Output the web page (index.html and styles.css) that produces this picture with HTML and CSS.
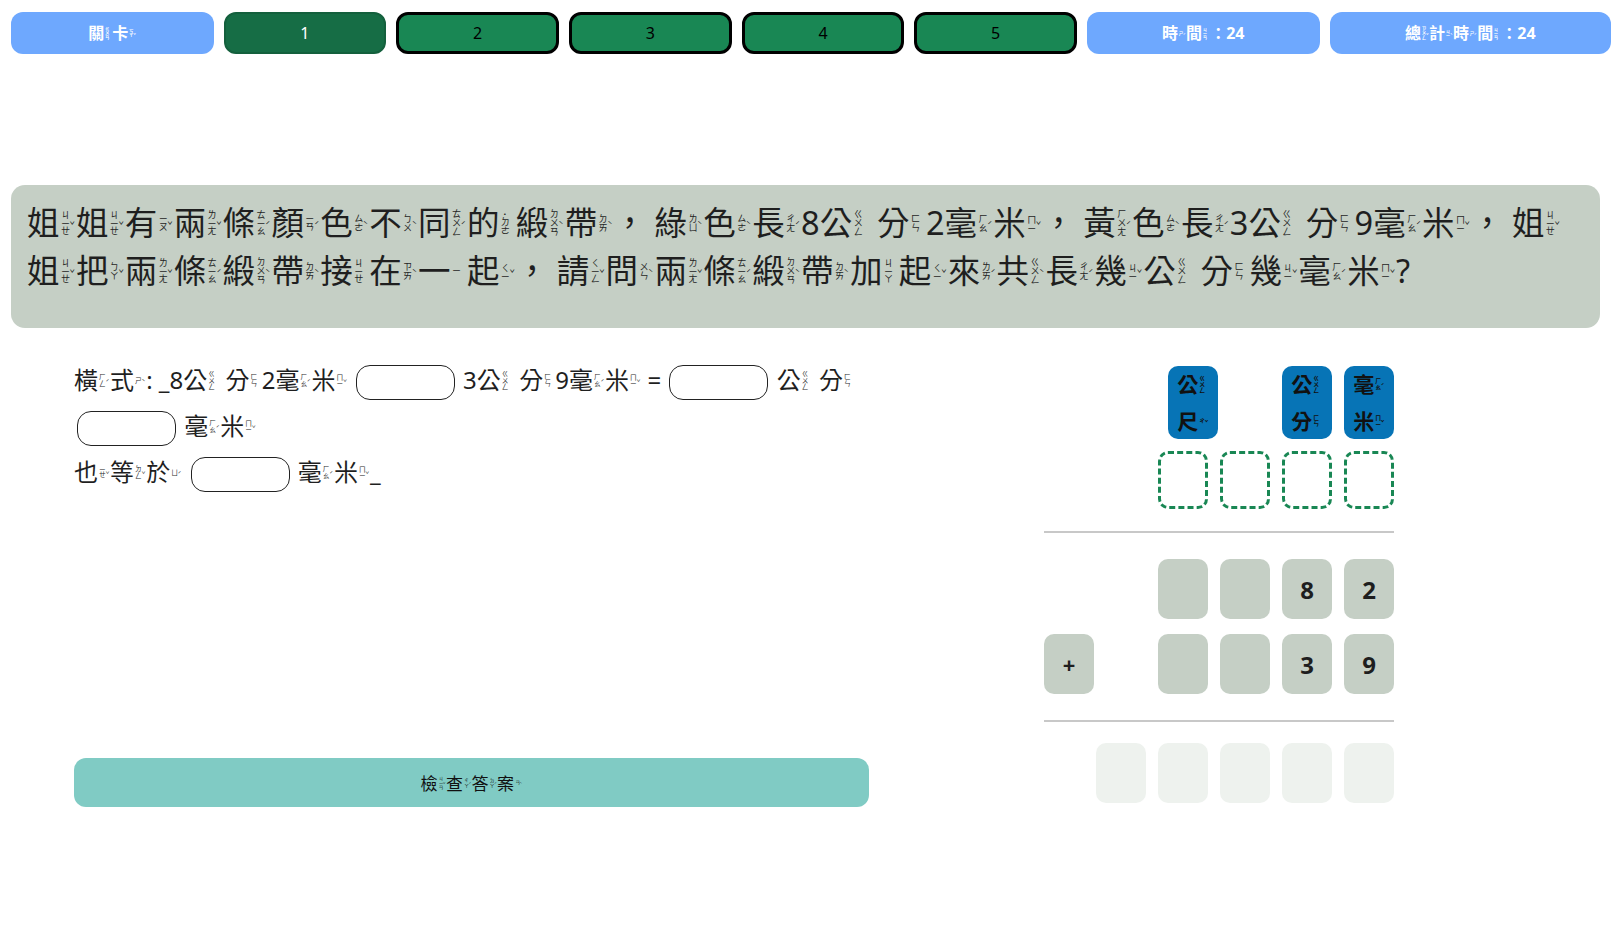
FILE: index.html
```html
<!DOCTYPE html>
<html lang="zh-Hant">
<head>
<meta charset="utf-8">
<title>緞帶加法</title>
<link rel="stylesheet" href="styles.css">
</head>
<body>
<nav class="bar">
  <div class="btn blue"><span class="z" data-p="ㄍㄨㄢ" data-t="">關</span><span class="z" data-p="ㄎㄚ" data-t="ˇ">卡</span></div>
  <div class="btn cur">1</div>
  <div class="btn lvl">2</div>
  <div class="btn lvl">3</div>
  <div class="btn lvl">4</div>
  <div class="btn lvl">5</div>
  <div class="btn blue"><span class="z" data-p="ㄕ" data-t="ˊ">時</span><span class="z" data-p="ㄐㄧㄢ" data-t="">間</span>：24</div>
  <div class="btn blue"><span class="z" data-p="ㄗㄨㄥ" data-t="ˇ">總</span><span class="z" data-p="ㄐㄧ" data-t="ˋ">計</span><span class="z" data-p="ㄕ" data-t="ˊ">時</span><span class="z" data-p="ㄐㄧㄢ" data-t="">間</span>：24</div>
</nav>

<section class="question">
  <p class="qtext"><span class="z" data-p="ㄐㄧㄝ" data-t="ˇ">姐</span><span class="z" data-p="ㄐㄧㄝ" data-t="ˇ">姐</span><span class="z" data-p="ㄧㄡ" data-t="ˇ">有</span><span class="z" data-p="ㄌㄧㄤ" data-t="ˇ">兩</span><span class="z" data-p="ㄊㄧㄠ" data-t="ˊ">條</span><span class="z" data-p="ㄧㄢ" data-t="ˊ">顏</span><span class="z" data-p="ㄙㄜ" data-t="ˋ">色</span><span class="z" data-p="ㄅㄨ" data-t="ˋ">不</span><span class="z" data-p="ㄊㄨㄥ" data-t="ˊ">同</span><span class="z" data-p="˙ㄉㄜ" data-t="">的</span><span class="z" data-p="ㄉㄨㄢ" data-t="ˋ">緞</span><span class="z" data-p="ㄉㄞ" data-t="ˋ">帶</span>， <span class="z" data-p="ㄌㄩ" data-t="ˋ">綠</span><span class="z" data-p="ㄙㄜ" data-t="ˋ">色</span><span class="z" data-p="ㄔㄤ" data-t="ˊ">長</span>8<span class="z" data-p="ㄍㄨㄥ" data-t="">公</span> <span class="z" data-p="ㄈㄣ" data-t="">分</span>2<span class="z" data-p="ㄏㄠ" data-t="ˊ">毫</span><span class="z" data-p="ㄇㄧ" data-t="ˇ">米</span>， <span class="z" data-p="ㄏㄨㄤ" data-t="ˊ">黃</span><span class="z" data-p="ㄙㄜ" data-t="ˋ">色</span><span class="z" data-p="ㄔㄤ" data-t="ˊ">長</span>3<span class="z" data-p="ㄍㄨㄥ" data-t="">公</span> <span class="z" data-p="ㄈㄣ" data-t="">分</span>9<span class="z" data-p="ㄏㄠ" data-t="ˊ">毫</span><span class="z" data-p="ㄇㄧ" data-t="ˇ">米</span>， <span class="z" data-p="ㄐㄧㄝ" data-t="ˇ">姐</span><br><span class="z" data-p="ㄐㄧㄝ" data-t="ˇ">姐</span><span class="z" data-p="ㄅㄚ" data-t="ˇ">把</span><span class="z" data-p="ㄌㄧㄤ" data-t="ˇ">兩</span><span class="z" data-p="ㄊㄧㄠ" data-t="ˊ">條</span><span class="z" data-p="ㄉㄨㄢ" data-t="ˋ">緞</span><span class="z" data-p="ㄉㄞ" data-t="ˋ">帶</span><span class="z" data-p="ㄐㄧㄝ" data-t="">接</span><span class="z" data-p="ㄗㄞ" data-t="ˋ">在</span><span class="z" data-p="ㄧ" data-t="">一</span><span class="z" data-p="ㄑㄧ" data-t="ˇ">起</span>， <span class="z" data-p="ㄑㄧㄥ" data-t="ˇ">請</span><span class="z" data-p="ㄨㄣ" data-t="ˋ">問</span><span class="z" data-p="ㄌㄧㄤ" data-t="ˇ">兩</span><span class="z" data-p="ㄊㄧㄠ" data-t="ˊ">條</span><span class="z" data-p="ㄉㄨㄢ" data-t="ˋ">緞</span><span class="z" data-p="ㄉㄞ" data-t="ˋ">帶</span><span class="z" data-p="ㄐㄧㄚ" data-t="">加</span><span class="z" data-p="ㄑㄧ" data-t="ˇ">起</span><span class="z" data-p="ㄌㄞ" data-t="ˊ">來</span><span class="z" data-p="ㄍㄨㄥ" data-t="ˋ">共</span><span class="z" data-p="ㄔㄤ" data-t="ˊ">長</span><span class="z" data-p="ㄐㄧ" data-t="ˇ">幾</span><span class="z" data-p="ㄍㄨㄥ" data-t="">公</span> <span class="z" data-p="ㄈㄣ" data-t="">分</span><span class="z" data-p="ㄐㄧ" data-t="ˇ">幾</span><span class="z" data-p="ㄏㄠ" data-t="ˊ">毫</span><span class="z" data-p="ㄇㄧ" data-t="ˇ">米</span>?</p>
</section>

<main class="work">
  <div class="left">
    <p class="formula"><span class="z" data-p="ㄏㄥ" data-t="ˊ">橫</span><span class="z" data-p="ㄕ" data-t="ˋ">式</span>: _8<span class="z" data-p="ㄍㄨㄥ" data-t="">公</span> <span class="z" data-p="ㄈㄣ" data-t="">分</span>2<span class="z" data-p="ㄏㄠ" data-t="ˊ">毫</span><span class="z" data-p="ㄇㄧ" data-t="ˇ">米</span> <input class="box" type="text"> 3<span class="z" data-p="ㄍㄨㄥ" data-t="">公</span> <span class="z" data-p="ㄈㄣ" data-t="">分</span>9<span class="z" data-p="ㄏㄠ" data-t="ˊ">毫</span><span class="z" data-p="ㄇㄧ" data-t="ˇ">米</span> = <input class="box" type="text"> <span class="z" data-p="ㄍㄨㄥ" data-t="">公</span> <span class="z" data-p="ㄈㄣ" data-t="">分</span><br><input class="box first" type="text"> <span class="z" data-p="ㄏㄠ" data-t="ˊ">毫</span><span class="z" data-p="ㄇㄧ" data-t="ˇ">米</span><br><span class="z" data-p="ㄧㄝ" data-t="ˇ">也</span><span class="z" data-p="ㄉㄥ" data-t="ˇ">等</span><span class="z" data-p="ㄩ" data-t="ˊ">於</span> <input class="box" type="text"> <span class="z" data-p="ㄏㄠ" data-t="ˊ">毫</span><span class="z" data-p="ㄇㄧ" data-t="ˇ">米</span>_</p>
    <button class="check" type="button"><span class="z" data-p="ㄐㄧㄢ" data-t="ˇ">檢</span><span class="z" data-p="ㄔㄚ" data-t="ˊ">查</span><span class="z" data-p="ㄉㄚ" data-t="ˊ">答</span><span class="z" data-p="ㄢ" data-t="ˋ">案</span></button>
  </div>

  <div class="calc">
    <div class="row">
      <div class="head wide"><span class="z" data-p="ㄍㄨㄥ" data-t="">公</span><span class="z" data-p="ㄔ" data-t="ˇ">尺</span></div>
      <div class="head"><span class="z" data-p="ㄍㄨㄥ" data-t="">公</span><span class="z" data-p="ㄈㄣ" data-t="">分</span></div>
      <div class="head"><span class="z" data-p="ㄏㄠ" data-t="ˊ">毫</span><span class="z" data-p="ㄇㄧ" data-t="ˇ">米</span></div>
    </div>
    <div class="row slots">
      <div class="slot"></div><div class="slot"></div><div class="slot"></div><div class="slot"></div>
    </div>
    <hr class="rule first-rule">
    <div class="row r1">
      <div class="tile"></div><div class="tile"></div><div class="tile">8</div><div class="tile">2</div>
    </div>
    <div class="row r2">
      <div class="tile op">+</div>
      <div class="group">
        <div class="tile"></div><div class="tile"></div><div class="tile">3</div><div class="tile">9</div>
      </div>
    </div>
    <hr class="rule second-rule">
    <div class="row result">
      <div class="tile light"></div><div class="tile light"></div><div class="tile light"></div><div class="tile light"></div><div class="tile light"></div>
    </div>
  </div>
</main>
</body>
</html>
```

FILE: styles.css
```css
* {
  box-sizing: border-box;
}

html, body {
  margin: 0;
  padding: 0;
  background: #ffffff;
}

body {
  font-family: "Noto Sans", "Noto Sans CJK TC", sans-serif;
  color: #212529;
}

/* 注音 unit: hanzi + vertical bopomofo + tone mark */
.z {
  display: inline-flex;
  align-items: center;
}

.z::before {
  content: attr(data-p);
  order: 1;
  writing-mode: vertical-rl;
  font-family: "Noto Sans CJK TC", sans-serif;
  font-size: 0.28em;
  line-height: 1;
  margin-left: 0.1em;
}

.z::after {
  content: attr(data-t);
  order: 2;
  flex-shrink: 0;
  width: 0.7em;
  font-family: "Noto Sans CJK TC", sans-serif;
  font-size: 0.28em;
  line-height: 1;
  transform: translateY(0.35em);
}

/* top bar */
.bar {
  display: grid;
  grid-template-columns: 203fr 163fr 163fr 163fr 163fr 163fr 233fr 282fr;
  gap: 10px;
  padding: 12px 13px 0 11px;
}

.btn {
  height: 42px;
  border-radius: 12px;
  display: flex;
  align-items: center;
  justify-content: center;
  font-size: 16px;
  line-height: 42px;
}

.blue {
  background: #6ea8fe;
  color: #ffffff;
  font-weight: 700;
}

.cur {
  background: #166d45;
  color: #ffffff;
  border: 2px solid #14603d;
}

.lvl {
  background: #198754;
  color: #000000;
  border: 3px solid #000000;
}

/* question */
.question {
  margin: 131px 24px 0 11px;
  background: #c5cfc5;
  border-radius: 14px;
  padding: 14px 16px 33px;
}

.qtext {
  margin: 0;
  font-size: 32.5px;
  line-height: 48px;
  white-space: nowrap;
  color: #1f1f1f;
}

/* work area */
.work {
  display: flex;
  align-items: flex-start;
  gap: 175px;
  padding: 29px 0 0 74px;
}

.left {
  width: 795px;
  display: flex;
  flex-direction: column;
}

.formula {
  margin: 0;
  font-size: 24px;
  line-height: 46px;
  white-space: nowrap;
  color: #1f1f1f;
}

.box {
  display: inline-block;
  width: 99px;
  height: 35px;
  border: 1.5px solid #222222;
  border-radius: 14px;
  vertical-align: middle;
  margin: 0 2px;
  padding: 0 8px;
  font-size: 18px;
  background: #ffffff;
}

.box.first {
  margin-left: 3px;
}

.check {
  margin-top: 263px;
  height: 49px;
  width: 100%;
  border: none;
  border-radius: 12px;
  background: #80cbc4;
  color: #111111;
  font-family: "Noto Sans", "Noto Sans CJK TC", sans-serif;
  font-size: 17px;
  display: flex;
  align-items: center;
  justify-content: center;
}

/* vertical calculation */
.calc {
  width: 350px;
  padding-top: 9px;
  display: flex;
  flex-direction: column;
}

.row {
  display: flex;
  justify-content: flex-end;
  gap: 12px;
}

.head {
  width: 50px;
  height: 73px;
  border-radius: 10px;
  background: #0774b6;
  color: #111111;
  font-size: 21px;
  font-weight: 700;
  line-height: 36.5px;
  display: flex;
  flex-direction: column;
  align-items: center;
  justify-content: center;
}

.head.wide {
  margin-right: 52px;
}

.slots {
  margin-top: 12px;
}

.slot {
  width: 50px;
  height: 58px;
  border: 3px dashed #198754;
  border-radius: 10px;
}

.rule {
  border: 0;
  height: 2px;
  background: #c8c8c8;
  margin: 0;
}

.first-rule {
  margin-top: 22px;
}

.r1 {
  margin-top: 26px;
}

.r2 {
  margin-top: 15px;
  justify-content: space-between;
}

.group {
  display: flex;
  gap: 12px;
}

.second-rule {
  margin-top: 26px;
}

.result {
  margin-top: 21px;
}

.tile {
  width: 50px;
  height: 60px;
  border-radius: 10px;
  background: #c5cfc5;
  display: flex;
  align-items: center;
  justify-content: center;
  font-size: 24px;
  font-weight: 700;
  color: #1e1e1e;
}

.tile.op {
  font-size: 22px;
}

.tile.light {
  background: #eef2ee;
}
```
